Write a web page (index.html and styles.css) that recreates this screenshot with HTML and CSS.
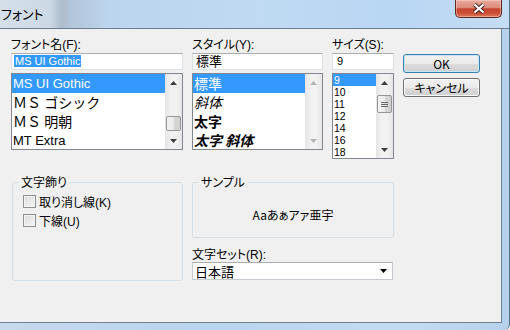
FILE: index.html
```html
<!DOCTYPE html>
<html lang="ja">
<head>
    <meta charset="UTF-8">
    <title>フォント</title>
    <link rel="stylesheet" href="styles.css">
</head>
<body>
<div class="window">
    <div class="titlebar">
        <span class="title">フォント</span>
        <div class="close-btn">
            <svg width="14" height="11" viewBox="0 0 14 11">
                <path d="M2.5 1.5L11.5 9.5M11.5 1.5L2.5 9.5" stroke="#4a231d" stroke-width="4.2"/>
                <path d="M2.5 1.5L11.5 9.5M11.5 1.5L2.5 9.5" stroke="#ffffff" stroke-width="2.2"/>
            </svg>
        </div>
    </div>
    <div class="frame">
        <div class="client">
            <!-- font name -->
            <div class="col">
                <div class="label">フォント名(F):</div>
                <div class="textbox latin"><span class="hl">MS UI Gothic</span></div>
                <div class="listbox font-list">
                    <ul class="items">
                        <li class="selected latin">MS UI Gothic</li>
                        <li class="mono">ＭＳ ゴシック</li>
                        <li class="mono">ＭＳ 明朝</li>
                        <li class="latin">MT Extra</li>
                    </ul>
                    <div class="scrollbar">
                        <div class="sb-arrow"><svg width="7" height="4"><path d="M0 4L3.5 0L7 4Z"/></svg></div>
                        <div class="sb-track"><div class="sb-thumb font-thumb"></div></div>
                        <div class="sb-arrow"><svg width="7" height="4"><path d="M0 0L3.5 4L7 0Z"/></svg></div>
                    </div>
                </div>
            </div>

            <!-- style -->
            <div class="col">
                <div class="label">スタイル(Y):</div>
                <div class="textbox">標準</div>
                <div class="listbox style-list">
                    <ul class="items">
                        <li class="selected">標準</li>
                        <li class="italic">斜体</li>
                        <li class="bold">太字</li>
                        <li class="bold italic">太字 斜体</li>
                    </ul>
                    <div class="scrollbar disabled">
                        <div class="sb-arrow"><svg width="7" height="4"><path d="M0 4L3.5 0L7 4Z"/></svg></div>
                        <div class="sb-track"></div>
                        <div class="sb-arrow"><svg width="7" height="4"><path d="M0 0L3.5 4L7 0Z"/></svg></div>
                    </div>
                </div>
            </div>

            <!-- size -->
            <div class="col">
                <div class="label">サイズ(S):</div>
                <div class="textbox latin">9</div>
                <div class="listbox size-list">
                    <ul class="items">
                        <li class="selected">9</li>
                        <li>10</li>
                        <li>11</li>
                        <li>12</li>
                        <li>14</li>
                        <li>16</li>
                        <li>18</li>
                    </ul>
                    <div class="scrollbar">
                        <div class="sb-arrow"><svg width="7" height="4"><path d="M0 4L3.5 0L7 4Z"/></svg></div>
                        <div class="sb-track">
                            <div class="sb-thumb size-thumb">
                                <svg width="7" height="7"><path d="M0 1.5H7M0 3.5H7M0 5.5H7" stroke="#6b6b6b" stroke-width="1"/></svg>
                            </div>
                        </div>
                        <div class="sb-arrow"><svg width="7" height="4"><path d="M0 0L3.5 4L7 0Z"/></svg></div>
                    </div>
                </div>
            </div>

            <!-- buttons -->
            <div class="buttons">
                <div class="btn default">OK</div>
                <div class="btn">キャンセル</div>
            </div>

            <!-- effects -->
            <fieldset class="group effects">
                <legend>文字飾り</legend>
                <div class="check-row"><span class="checkbox"></span>取り消し線(K)</div>
                <div class="check-row"><span class="checkbox"></span>下線(U)</div>
            </fieldset>

            <div class="lower-right">
                <fieldset class="group sample">
                    <legend>サンプル</legend>
                    <div class="sample-text">Aaあぁアァ亜宇</div>
                </fieldset>
                <div class="label charset-label">文字セット(R):</div>
                <div class="combo">
                    <span>日本語</span>
                    <svg width="7" height="4"><path d="M0 0L3.5 4L7 0Z" fill="#000"/></svg>
                </div>
            </div>
        </div>
    </div>
</div>
</body>
</html>
```

FILE: styles.css
```css
body {
    margin: 0;
    font-family: "Liberation Sans", "Noto Sans CJK JP", sans-serif;
    font-size: 12px;
    font-feature-settings: "palt";
    color: #000;
    background: #f0f0f0;
}
.window {
    width: 510px;
    height: 330px;
    box-sizing: border-box;
    display: flex;
    flex-direction: column;
    background: linear-gradient(to right, #c6d9ec, #b9d4ef 40%, #c3dbf2 80%, #b6d1ec);
    border-right: 1px solid #5f7185;
    border-bottom-right-radius: 6px;
}
.titlebar {
    height: 28px;
    display: flex;
    justify-content: space-between;
    align-items: flex-start;
    background: linear-gradient(to right, #d5e0eb 0, #ccd8e4 50px, #aebdcc 62px, #b3c6da 72px, #bcd5ee 110px, #c0daf3 260px, #b9d6f3 400px, #c5ddf4 100%);
    border-bottom: 1px solid #6a7c8e;
}
.title {
    padding: 6px 0 0 1px;
    font-family: "Noto Sans CJK JP", sans-serif;
    font-size: 13px;
    line-height: 16px;
}
.close-btn {
    width: 47px;
    height: 18px;
    box-sizing: border-box;
    margin-right: 7px;
    display: flex;
    align-items: center;
    justify-content: center;
    border: 1px solid #5c2a23;
    border-top: none;
    border-radius: 0 0 5px 5px;
    background: linear-gradient(#e9ab9e 0, #dc8a7b 45%, #c4452f 52%, #cc4f37 78%, #de7a5a 100%);
    box-shadow: inset 0 0 0 1px rgba(255, 220, 210, 0.45);
}
.frame {
    flex: 1;
    display: flex;
    padding: 0 7px 7px 0;
}
.client {
    flex: 1;
    background: #f0f0f0;
    border-right: 1px solid #6f8193;
    border-bottom: 1px solid #6f8193;
    display: grid;
    grid-template-columns: 172px 131px 62px 77px;
    column-gap: 9px;
    row-gap: 16px;
    align-items: start;
    align-content: start;
    padding: 9px 0 0 11px;
}
.col {
    display: flex;
    flex-direction: column;
}
.label {
    height: 15px;
    line-height: 15px;
    white-space: nowrap;
}
.textbox {
    height: 17px;
    box-sizing: border-box;
    background: #fff;
    border: 1px solid #dbdfe6;
    border-top-color: #abadb3;
    padding: 0 3px;
    line-height: 15px;
    font-size: 13px;
    white-space: nowrap;
}
.textbox.latin {
    font-size: 11px;
    padding-left: 4px;
}
.hl {
    background: #3399ff;
    color: #fff;
    padding: 0 1px;
    margin-left: -2px;
}
.listbox {
    margin-top: 3px;
    display: flex;
    box-sizing: border-box;
    border: 1px solid #828790;
    background: #fff;
}
.font-list,
.style-list {
    height: 77px;
}
.size-list {
    height: 86px;
}
.items {
    flex: 1;
    list-style: none;
    margin: 0;
    padding: 0;
    overflow: hidden;
}
.items li {
    white-space: nowrap;
    padding-left: 1px;
}
.items li.selected {
    background: #3399ff;
    color: #fff;
}
.font-list li,
.style-list li {
    height: 19px;
    line-height: 19px;
    font-size: 14px;
}
.font-list li.latin {
    font-size: 13px;
}
.font-list li.mono {
    font-family: "Noto Sans CJK JP", sans-serif;
    font-feature-settings: normal;
}
.style-list li {
    font-family: "Noto Sans CJK JP", sans-serif;
    font-feature-settings: normal;
}
.italic {
    font-style: italic;
}
.bold {
    font-weight: bold;
}
.size-list li {
    height: 12px;
    line-height: 12px;
    font-size: 10.5px;
    width: 42px;
}
.scrollbar {
    width: 17px;
    display: flex;
    flex-direction: column;
    background: linear-gradient(to right, #e4e4e4, #f2f2f2 35%, #f2f2f2 65%, #e6e6e6);
}
.sb-arrow {
    height: 17px;
    display: flex;
    align-items: center;
    justify-content: center;
    fill: #3d3d3d;
}
.scrollbar.disabled .sb-arrow {
    fill: #b4b4b4;
}
.sb-track {
    flex: 1;
}
.sb-thumb {
    margin: 0 1px;
    box-sizing: border-box;
    border: 1px solid #969696;
    border-radius: 2px;
    background: linear-gradient(to right, #f4f4f4, #e9e9e9 50%, #d9d9d9 51%, #d0d0d0);
    display: flex;
    align-items: center;
    justify-content: center;
}
.font-thumb {
    margin-top: 25px;
    height: 15px;
}
.size-thumb {
    margin-top: 4px;
    height: 18px;
}
.buttons {
    display: flex;
    flex-direction: column;
    gap: 5px;
    padding-top: 16px;
}
.btn {
    height: 19px;
    box-sizing: border-box;
    border: 1px solid #707070;
    border-radius: 3px;
    background: linear-gradient(#f2f2f2 0, #ebebeb 50%, #dddddd 51%, #cfcfcf 100%);
    box-shadow: inset 0 0 0 1px #fbfbfb;
    text-align: center;
    line-height: 17px;
    font-family: "Noto Sans CJK JP", sans-serif;
}
.btn.default {
    border-color: #3c7fb1;
    box-shadow: inset 0 0 0 1px #c4e6f7;
}
.group {
    margin: 0;
    box-sizing: border-box;
    border: 1px solid #d5dfe5;
    border-radius: 3px;
    min-width: 0;
}
.group legend {
    padding: 0 2px;
    line-height: 14px;
    font-family: "Noto Sans CJK JP", sans-serif;
}
.effects {
    margin: 0 0 0 1px;
    width: 171px;
    height: 106px;
    padding: 3px 6px 0;
}
.check-row {
    height: 19px;
    display: flex;
    align-items: center;
    padding-left: 4px;
    white-space: nowrap;
}
.checkbox {
    width: 13px;
    height: 13px;
    box-sizing: border-box;
    margin-right: 3px;
    border: 1px solid #8e8f8f;
    background: linear-gradient(135deg, #dbdbdb, #f6f6f6);
    box-shadow: inset 0 0 0 1px #f4f4f4;
}
.lower-right {
    grid-column: 2 / 4;
    display: flex;
    flex-direction: column;
}
.sample {
    margin: 0;
    height: 63px;
    padding: 19px 6px 0;
}
.sample-text {
    text-align: center;
    line-height: 14px;
    font-family: "Noto Sans CJK JP", sans-serif;
    font-size: 12px;
}
.charset-label {
    margin-top: 10px;
    height: 14px;
    line-height: 14px;
}
.combo {
    height: 18px;
    box-sizing: border-box;
    margin-right: 1px;
    display: flex;
    align-items: center;
    justify-content: space-between;
    padding: 0 5px 0 2px;
    background: #fff;
    border: 1px solid #c5cad1;
    border-top-color: #abadb3;
    font-family: "Noto Sans CJK JP", sans-serif;
    font-size: 13px;
}
```
